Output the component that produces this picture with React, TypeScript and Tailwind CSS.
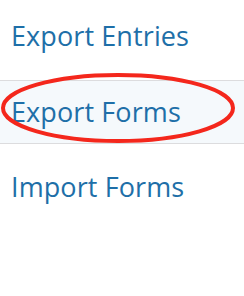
export default function App() {
  const items = [
    { label: 'Export Entries', row: 'h-[80px] pt-[22px] px-[11px]' },
    { label: 'Export Forms', row: 'h-[64px] pt-[17px] px-[11px] bg-[#f5f9fc] border-y border-[#dcdcde]' },
    { label: 'Import Forms', row: 'h-[80px] pt-[29px] px-[11px]' },
  ];

  return (
    <div className="relative w-[244px] h-[296px] bg-white overflow-hidden font-['Open_Sans',sans-serif]">
      <ul className="flex flex-col">
        {items.map((item) => (
          <li key={item.label} className={item.row}>
            <span className="block text-[27px] leading-none tracking-[0.1px] text-[#1e6fa8]">{item.label}</span>
          </li>
        ))}
      </ul>

      {/* red circle drawn over the active item */}
      <svg className="absolute left-0 top-0 pointer-events-none" width="244" height="296">
        <ellipse cx="118" cy="108" rx="115" ry="33" fill="none" stroke="#f4271c" strokeWidth="4" />
      </svg>
    </div>
  );
}
